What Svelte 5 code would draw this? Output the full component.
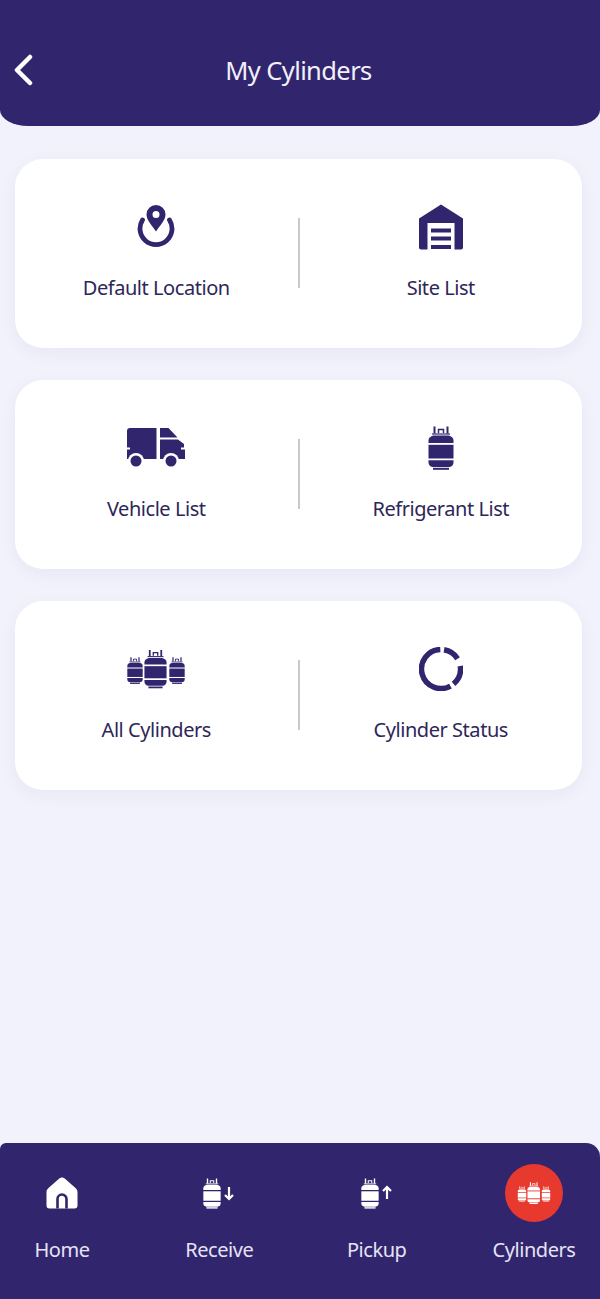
<script>
    // arc segment on the status ring, angles in degrees clockwise from top
    function arc(start, end, r = 19.5, c = 22) {
        const pt = (a) => {
            const rad = (a * Math.PI) / 180;
            return `${(c + r * Math.sin(rad)).toFixed(2)} ${(c - r * Math.cos(rad)).toFixed(2)}`;
        };
        const large = end - start > 180 ? 1 : 0;
        return `M${pt(start)}A${r} ${r} 0 ${large} 1 ${pt(end)}`;
    }

    const rows = [
        [
            { label: "Default Location", icon: "location" },
            { label: "Site List", icon: "garage" },
        ],
        [
            { label: "Vehicle List", icon: "truck" },
            { label: "Refrigerant List", icon: "cylinder" },
        ],
        [
            { label: "All Cylinders", icon: "trio" },
            { label: "Cylinder Status", icon: "status" },
        ],
    ];

    const tabs = [
        { label: "Home", icon: "home" },
        { label: "Receive", icon: "receive" },
        { label: "Pickup", icon: "pickup" },
        { label: "Cylinders", icon: "cylinders", active: true },
    ];
</script>

<svg class="defs" width="0" height="0" aria-hidden="true">
    <defs>
        <symbol id="cyl" viewBox="0 0 26 44">
            <path d="M6.500 0.500v7M19.500 0.500v7" fill="none" stroke="currentColor" stroke-width="2" />
            <path d="M10.500 7v-3.500h5V7" fill="none" stroke="currentColor" stroke-width="1.500" />
            <path d="M4 8h18" fill="none" stroke="currentColor" stroke-width="1.200" />
            <path d="M0.500 17v-2.500c0-3 3-5 6.500-5h12c3.500 0 6.500 2 6.500 5v2.500z" fill="currentColor" />
            <rect x="0.500" y="18.800" width="25" height="13.700" fill="currentColor" />
            <path d="M0.500 34.300h25v2.200c0 2.500-2 4.500-4.500 4.500h-16c-2.500 0-4.500-2-4.500-4.500z" fill="currentColor" />
            <rect x="5" y="41.800" width="16" height="2" fill="currentColor" />
        </symbol>
    </defs>
</svg>

{#snippet icon(name)}
    {#if name === "location"}
        <svg width="38" height="44" viewBox="0 0 38 44">
            <path d="M5.500 15A16 16 0 1 0 32.500 15" fill="none" stroke="currentColor" stroke-width="4.800" stroke-linecap="round" />
            <path fill-rule="evenodd" fill="currentColor" d="M19 0a9.500 9.500 0 0 1 9.500 9.500c0 5.500-5.500 11-9.500 17c-4-6-9.500-11.500-9.500-17a9.500 9.500 0 0 1 9.500-9.500zM19 6a3.500 3.500 0 1 0 0 7a3.500 3.500 0 0 0 0-7z" />
        </svg>
    {:else if name === "garage"}
        <svg width="46" height="46" viewBox="0 0 46 46">
            <path fill="currentColor" d="M23 0.500L45 14.500V43.500a2 2 0 0 1-2 2H3a2 2 0 0 1-2-2V14.500z" />
            <rect x="9.500" y="19" width="27" height="27" fill="#fff" />
            <rect x="13" y="24.500" width="20" height="4" fill="currentColor" />
            <rect x="13" y="32.500" width="20" height="4" fill="currentColor" />
            <rect x="13" y="41" width="20" height="4" fill="currentColor" />
        </svg>
    {:else if name === "truck"}
        <svg width="60" height="42" viewBox="0 0 60 42">
            <path fill="currentColor" d="M4 1H30.500V32H1V22.500h3v-2H1V4a3 3 0 0 1 3-3z" />
            <path fill="currentColor" d="M34 1h8.500l9 9.500H34z" />
            <path fill="currentColor" d="M34 12.500H52l6 4.500v3.500h-3v2h4V32H34z" />
            <circle cx="10" cy="34" r="8" fill="#fff" />
            <circle cx="45" cy="34" r="8" fill="#fff" />
            <circle cx="10" cy="34" r="5.500" fill="currentColor" />
            <circle cx="45" cy="34" r="5.500" fill="currentColor" />
        </svg>
    {:else if name === "cylinder"}
        <svg class="single" width="26" height="44"><use href="#cyl" /></svg>
    {:else if name === "trio"}
        <svg width="58" height="42" viewBox="0 0 58 42">
            <use href="#cyl" x="0" y="8" width="16" height="29" />
            <use href="#cyl" x="17" y="0" width="23" height="42" />
            <use href="#cyl" x="42" y="8" width="16" height="29" />
        </svg>
    {:else if name === "status"}
        <svg width="44" height="44" viewBox="0 0 44 44" fill="none" stroke="currentColor" stroke-width="5.500">
            <path d={arc(151, 358)} />
            <path d={arc(9, 58)} />
            <path d={arc(81, 140)} />
        </svg>
    {:else if name === "home"}
        <svg width="32" height="32" viewBox="0 0 32 32">
            <path fill="currentColor" d="M16 0.500c1.200 0 2.200.6 3 1.300L29.500 11c1.200 1.100 2 2.500 2 4.200V28.500a3 3 0 0 1-3 3H3.500a3 3 0 0 1-3-3V15.200c0-1.700.8-3.100 2-4.200L13 1.800c.8-.7 1.800-1.300 3-1.300z" />
            <path d="M11.500 31.500V22a4.500 4.500 0 0 1 9 0v9.500" fill="none" stroke="#31266e" stroke-width="2.600" />
        </svg>
    {:else if name === "receive" || name === "pickup"}
        <svg class="tank" width="32" height="31" viewBox="0 0 32 31">
            <use href="#cyl" x="0" y="0" width="18" height="31" />
            <path
                d={name === "receive" ? "M26 9v12M22 17l4 4l4-4" : "M26 21V9M22 13l4-4l4 4"}
                fill="none"
                stroke="currentColor"
                stroke-width="2.200"
            />
        </svg>
    {:else if name === "cylinders"}
        <svg width="34" height="24" viewBox="0 0 58 42">
            <use href="#cyl" x="0" y="8" width="16" height="29" />
            <use href="#cyl" x="17" y="0" width="23" height="42" />
            <use href="#cyl" x="42" y="8" width="16" height="29" />
        </svg>
    {/if}
{/snippet}

<div class="screen">
    <header class="topbar">
        <button class="back" aria-label="Back">
            <svg width="20" height="32" viewBox="0 0 20 32">
                <path d="M16 3L3 16l13 13" fill="none" stroke="#fff" stroke-width="4.500" stroke-linecap="round" stroke-linejoin="round" />
            </svg>
        </button>
        <h1>My Cylinders</h1>
    </header>

    <main class="content">
        {#each rows as row}
            <section class="card">
                <div class="tile">
                    <span class="glyph">{@render icon(row[0].icon)}</span>
                    <span class="label">{row[0].label}</span>
                </div>
                <div class="divider"></div>
                <div class="tile">
                    <span class="glyph">{@render icon(row[1].icon)}</span>
                    <span class="label">{row[1].label}</span>
                </div>
            </section>
        {/each}
    </main>

    <nav class="tabbar">
        {#each tabs as tab}
            <div class="tab">
                <span class="tab-icon" class:active={tab.active}>{@render icon(tab.icon)}</span>
                <span class="tab-label">{tab.label}</span>
            </div>
        {/each}
    </nav>
</div>

<style>
    :global(body) {
        background: #f2f2fc;
    }

    .defs {
        position: absolute;
    }

    .screen {
        display: flex;
        flex-direction: column;
        height: 1299px;
        overflow: hidden;
        font-family: "Noto Sans", "Open Sans", sans-serif;
        background: #f2f2fc;
    }

    .topbar {
        display: grid;
        grid-template-columns: 1fr auto 1fr;
        align-items: center;
        height: 126px;
        box-sizing: border-box;
        padding: 41px 17px 27px 14px;
        background: #31266e;
        border-radius: 0 0 28px 28px / 0 0 16px 16px;
    }

    .back {
        display: flex;
        width: 20px;
        padding: 0;
        margin-top: 0;
        background: none;
        border: none;
    }

    h1 {
        margin: 0;
        font-size: 25.500px;
        font-weight: 400;
        letter-spacing: -0.6px;
        color: #f2f0fa;
    }

    .content {
        flex: 1;
        display: flex;
        flex-direction: column;
        gap: 32.500px;
        padding: 33px 18px 0 15px;
    }

    .card {
        display: grid;
        grid-template-columns: 1fr 2px 1fr;
        align-items: center;
        height: 188.500px;
        background: #fff;
        border-radius: 28px;
        box-shadow: 0 5px 18px rgba(49, 38, 110, 0.05);
    }

    .divider {
        height: 70px;
        margin-top: -1px;
        background: #c9c9cd;
    }

    .tile {
        display: flex;
        flex-direction: column;
        align-items: center;
        gap: 24px;
        color: #31266e;
    }

    .glyph {
        display: flex;
        align-items: center;
        justify-content: center;
        height: 46px;
    }

    .label {
        font-size: 20px;
        line-height: 28px;
        letter-spacing: -0.45px;
        color: #2e2658;
    }

    .tabbar {
        display: flex;
        justify-content: space-between;
        height: 156px;
        box-sizing: border-box;
        padding: 21px 21px 0 17px;
        background: #31266e;
        border-radius: 6px 14px 0 0;
    }

    .tab {
        display: flex;
        flex-direction: column;
        align-items: center;
        width: 90px;
        gap: 14px;
    }

    .tab-icon {
        display: flex;
        align-items: center;
        justify-content: center;
        width: 58px;
        height: 58px;
        color: #fff;
        border-radius: 50%;
    }

    .tab-icon.active {
        background: #e8392e;
    }

    .tab-label {
        font-size: 20px;
        line-height: 28px;
        letter-spacing: -0.45px;
        color: #e6e3f4;
        white-space: nowrap;
    }
</style>
